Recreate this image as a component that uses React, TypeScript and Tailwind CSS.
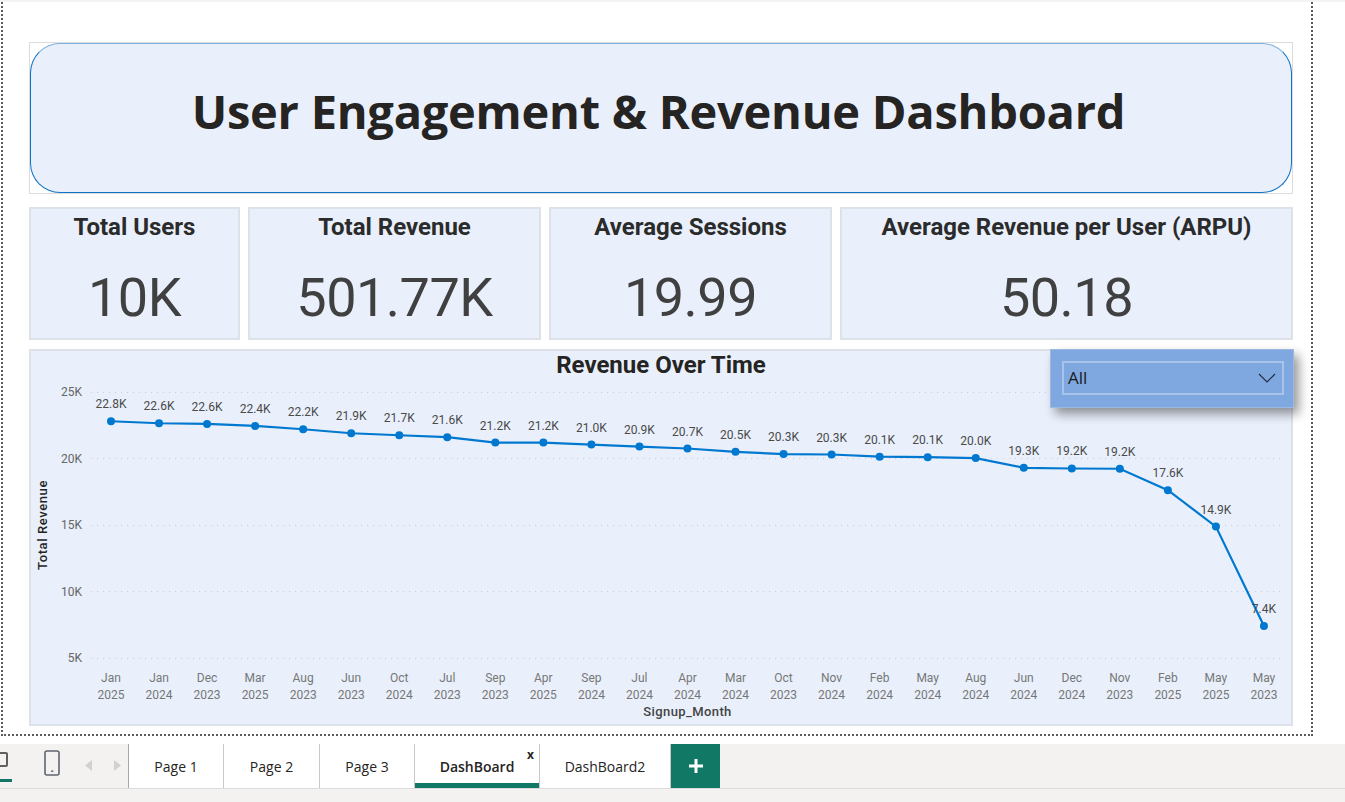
const points = [
  { m: "Jan", y: "2025", v: 22.8, l: "22.8K" },
  { m: "Jan", y: "2024", v: 22.65, l: "22.6K" },
  { m: "Dec", y: "2023", v: 22.6, l: "22.6K" },
  { m: "Mar", y: "2025", v: 22.45, l: "22.4K" },
  { m: "Aug", y: "2023", v: 22.2, l: "22.2K" },
  { m: "Jun", y: "2023", v: 21.9, l: "21.9K" },
  { m: "Oct", y: "2024", v: 21.75, l: "21.7K" },
  { m: "Jul", y: "2023", v: 21.6, l: "21.6K" },
  { m: "Sep", y: "2023", v: 21.2, l: "21.2K" },
  { m: "Apr", y: "2025", v: 21.2, l: "21.2K" },
  { m: "Sep", y: "2024", v: 21.05, l: "21.0K" },
  { m: "Jul", y: "2024", v: 20.9, l: "20.9K" },
  { m: "Apr", y: "2024", v: 20.75, l: "20.7K" },
  { m: "Mar", y: "2024", v: 20.5, l: "20.5K" },
  { m: "Oct", y: "2023", v: 20.33, l: "20.3K" },
  { m: "Nov", y: "2024", v: 20.3, l: "20.3K" },
  { m: "Feb", y: "2024", v: 20.14, l: "20.1K" },
  { m: "May", y: "2024", v: 20.1, l: "20.1K" },
  { m: "Aug", y: "2024", v: 20.03, l: "20.0K" },
  { m: "Jun", y: "2024", v: 19.3, l: "19.3K" },
  { m: "Dec", y: "2024", v: 19.25, l: "19.2K" },
  { m: "Nov", y: "2023", v: 19.23, l: "19.2K" },
  { m: "Feb", y: "2025", v: 17.62, l: "17.6K" },
  { m: "May", y: "2025", v: 14.88, l: "14.9K" },
  { m: "May", y: "2023", v: 7.4, l: "7.4K" },
];

const kpis = [
  { title: "Total Users", value: "10K", width: "w-[211px]" },
  { title: "Total Revenue", value: "501.77K", width: "w-[293px]" },
  { title: "Average Sessions", value: "19.99", width: "w-[283px]" },
  { title: "Average Revenue per User (ARPU)", value: "50.18", width: "w-[453px]" },
];

// svg sits below the chart title, so page coords are shifted by this much
const OX = 31;
const OY = 381;
const px = (i: number) => 111 + i * 48.04 - OX;
const py = (v: number) => 658 - (v - 5) * 13.3 - OY;

function RevenueChart() {
  const line = points.map((p, i) => `${px(i)},${py(p.v)}`).join(" ");
  return (
    <svg width="1259" height="342" className="block font-['Roboto',sans-serif]">
      {[25, 20, 15, 10, 5].map((t) => (
        <g key={t}>
          <line
            x1={91 - OX}
            x2={1284 - OX}
            y1={Math.floor(py(t)) + 0.5}
            y2={Math.floor(py(t)) + 0.5}
            stroke="#c9cdd4"
            strokeWidth="1"
            strokeDasharray="1 5"
          />
          <text x={82 - OX} y={py(t) + 4} textAnchor="end" fontSize="12" fill="#666666">
            {t}K
          </text>
        </g>
      ))}
      <polyline points={line} fill="none" stroke="#0078d0" strokeWidth="2.2" />
      {points.map((p, i) => (
        <g key={i}>
          <circle cx={px(i)} cy={py(p.v)} r="4" fill="#0078d0" />
          <text x={px(i)} y={py(p.v) - 13} textAnchor="middle" fontSize="12" fill="#4a4a4a">
            {p.l}
          </text>
          <text x={px(i)} y={682 - OY} textAnchor="middle" fontSize="12" fill="#777777">
            {p.m}
          </text>
          <text x={px(i)} y={699 - OY} textAnchor="middle" fontSize="12" fill="#777777">
            {p.y}
          </text>
        </g>
      ))}
      <text x={687.5 - OX} y={716 - OY} textAnchor="middle" fontSize="13" fontWeight="500" letterSpacing="0.4" fill="#444444">
        Signup_Month
      </text>
      <text
        transform={`translate(${47 - OX} ${525 - OY}) rotate(-90)`}
        textAnchor="middle"
        fontSize="13"
        fontWeight="500"
        letterSpacing="0.6"
        fill="#252423"
      >
        Total Revenue
      </text>
    </svg>
  );
}

function Tab({ label, width, active }: { label: string; width: string; active?: boolean }) {
  return (
    <div className={`relative flex h-full items-center justify-center bg-white border-r border-[#c8c8c8] text-[14px] text-[#252423] ${width} ${active ? "font-semibold" : ""}`}>
      <span>{label}</span>
      {active && (
        <>
          <span className="absolute right-[5px] top-[4px] text-[12px] font-bold leading-[14px]">x</span>
          <span className="absolute bottom-0 left-0 right-0 h-[5px] bg-[#117865]" />
        </>
      )}
    </div>
  );
}

export default function App() {
  return (
    <div className="relative h-[802px] w-[1345px] overflow-hidden bg-white font-['Open_Sans',sans-serif]">
      <div className="h-[2px] bg-[#f3f3f3]" />
      <div className="ml-[1px] h-[734px] w-[1312px] border-x-2 border-b-2 border-dotted border-[#5a5a5a] pl-[26px] pt-[40px]">
        <div className="h-[152px] w-[1264px] border border-[#dcdcdc] bg-white">
          <div className="flex h-full items-center justify-center rounded-[30px] border border-[#0f72c4] border-t-[#7fb0de] bg-[#e9f0fb]">
            <h1 className="mb-[14px] mr-[5px] text-[47px] font-bold leading-none tracking-[-0.25px] text-[#252423]">User Engagement &amp; Revenue Dashboard</h1>
          </div>
        </div>

        <div className="mt-[13px] flex gap-[8px]">
          {kpis.map((k) => (
            <div key={k.title} className={`flex h-[133px] flex-col items-center border-2 border-[#dde1e8] bg-[#e9f0fb] font-['Roboto',sans-serif] ${k.width}`}>
              <div className="mt-[4px] text-[24px] font-bold leading-[28px] text-[#2b2b2b]">{k.title}</div>
              <div className="mt-[25px] text-[54px] leading-[64px] tracking-[-0.5px] text-[#404040]">{k.value}</div>
            </div>
          ))}
        </div>

        <div className="relative mt-[9px] h-[377px] w-[1264px] border-2 border-[#dde1e8] bg-[#e9f0fb]">
          <div className="h-[30px] text-center font-['Roboto',sans-serif] text-[24px] font-bold leading-[28px] text-[#252423]">
            Revenue Over Time
          </div>
          <RevenueChart />
          <div className="absolute right-[-3px] top-[-2px] h-[59px] w-[244px] border border-[#9db9e2] bg-[#7fa8e0] p-[11px] pr-[9px] shadow-[5px_6px_10px_rgba(0,0,0,0.4)]">
            <div className="flex h-[34px] items-center justify-between border-2 border-[#a9c4ea] px-[4px] text-[17px] text-[#1a1a1a]">
              <span>All</span>
              <svg width="18" height="11" viewBox="0 0 18 11" fill="none" stroke="#1f2a3a" strokeWidth="1.1" className="mr-[2px]">
                <path d="M1 1l8 8 8-8" />
              </svg>
            </div>
          </div>
        </div>
      </div>

      <div className="mt-[8px] flex h-[44px] bg-[#f3f2f1] font-['Open_Sans',sans-serif]">
        <div className="relative flex h-full w-[129px] items-center border-r border-[#a8a8a8]">
          <span className="absolute left-[-6px] top-[8px] h-[15px] w-[14px] rounded-[2px] border-2 border-[#5f5f5f]" />
          <span className="absolute bottom-[6px] left-0 h-[3px] w-[12px] bg-[#117865]" />
          <svg width="16" height="26" viewBox="0 0 16 26" fill="none" className="absolute left-[44px] top-[6px]">
            <rect x="1" y="1" width="14" height="24" rx="2" stroke="#5f6670" strokeWidth="1.6" />
            <rect x="7" y="20.5" width="2.4" height="1.4" fill="#5f6670" />
          </svg>
          <svg width="8" height="12" viewBox="0 0 8 12" className="absolute left-[85px] top-[16px]">
            <path d="M7 0v11L0 5.5z" fill="#d3d0d0" />
          </svg>
          <svg width="8" height="12" viewBox="0 0 8 12" className="absolute left-[113px] top-[16px]">
            <path d="M1 0v11l7-5.5z" fill="#d3d0d0" />
          </svg>
        </div>
        <Tab label="Page 1" width="w-[95px]" />
        <Tab label="Page 2" width="w-[96px]" />
        <Tab label="Page 3" width="w-[95px]" />
        <Tab label="DashBoard" width="w-[125px]" active />
        <Tab label="DashBoard2" width="w-[131px]" />
        <div className="flex h-full w-[49px] items-center justify-center bg-[#117865]">
          <svg width="14" height="14" viewBox="0 0 14 14" fill="#ffffff">
            <path d="M5.5 0h3v5.5H14v3H8.5V14h-3V8.5H0v-3h5.5z" />
          </svg>
        </div>
      </div>
      <div className="h-[14px] border-t border-[#dcdcdc] bg-[#f3f2f1]" />
    </div>
  );
}
